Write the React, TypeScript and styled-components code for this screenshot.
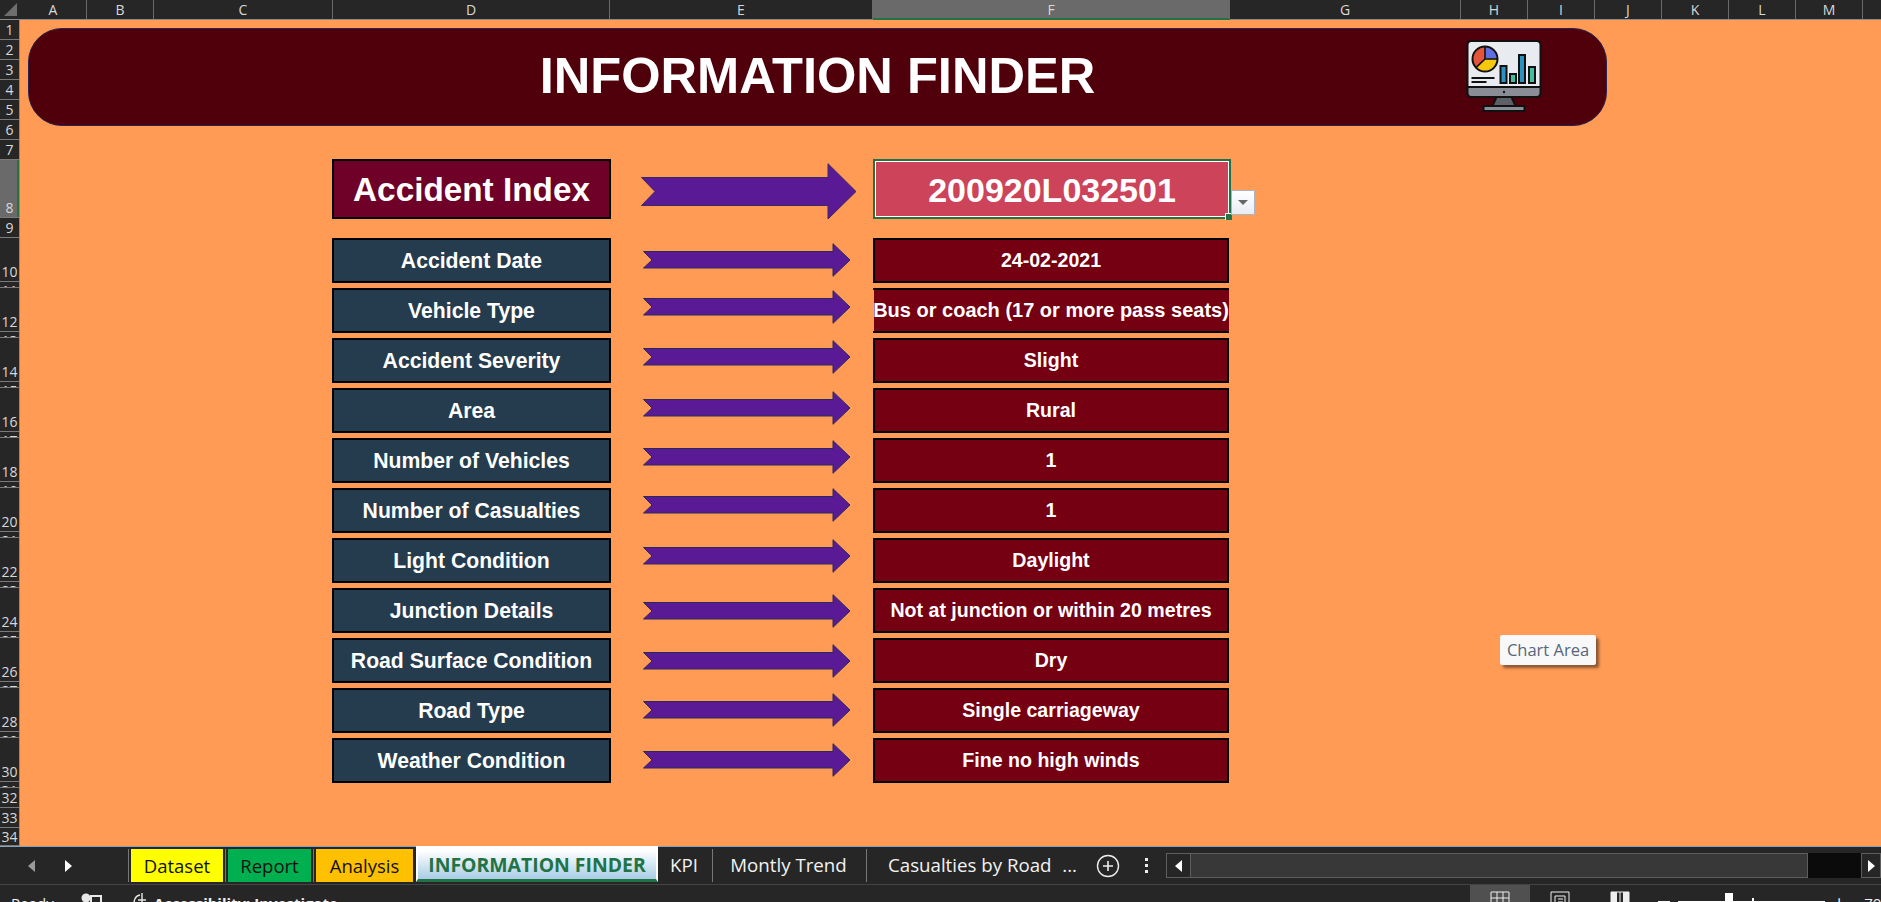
import React from "react";
import styled, { createGlobalStyle } from "styled-components";

const columns = [
  { name: "A", width: 67 },
  { name: "B", width: 67 },
  { name: "C", width: 179 },
  { name: "D", width: 277 },
  { name: "E", width: 263 },
  { name: "F", width: 357, selected: true },
  { name: "G", width: 231 },
  { name: "H", width: 67 },
  { name: "I", width: 67 },
  { name: "J", width: 67 },
  { name: "K", width: 67 },
  { name: "L", width: 67 },
  { name: "M", width: 67 },
];

const rowHeaders: { label: number; height: number; selected?: boolean }[] = [
  ...[1, 2, 3, 4, 5, 6, 7].map((label) => ({ label, height: 20 })),
  { label: 8, height: 58, selected: true },
  { label: 9, height: 20 },
  ...Array.from({ length: 22 }, (_, i) => ({
    label: i + 10,
    height: i % 2 === 0 ? 44 : 6,
  })),
  { label: 32, height: 20 },
  { label: 33, height: 20 },
  { label: 34, height: 18 },
];

const details = [
  { label: "Accident Date", value: "24-02-2021", lift: 1 },
  { label: "Vehicle Type", value: "Bus or coach (17 or more pass seats)", lift: 4, overflow: true },
  { label: "Accident Severity", value: "Slight", lift: 4 },
  { label: "Area", value: "Rural", lift: 3 },
  { label: "Number of Vehicles", value: "1", lift: 4 },
  { label: "Number of Casualties", value: "1", lift: 6 },
  { label: "Light Condition", value: "Daylight", lift: 5 },
  { label: "Junction Details", value: "Not at junction or within 20 metres", lift: 0 },
  { label: "Road Surface Condition", value: "Dry", lift: 0 },
  { label: "Road Type", value: "Single carriageway", lift: 1 },
  { label: "Weather Condition", value: "Fine no high winds", lift: 1 },
];

const Global = createGlobalStyle`
  html, body {
    margin: 0;
    padding: 0;
    overflow: hidden;
    background: #262626;
  }
`;

const Window = styled.div`
  width: 1881px;
  height: 902px;
  display: flex;
  flex-direction: column;
  overflow: hidden;
  background: #262626;
  font-family: "Open Sans", "Noto Sans", sans-serif;
`;

const ColumnBar = styled.div`
  display: flex;
  height: 20px;
  flex-shrink: 0;
  border-bottom: 1px solid #8a8a8a;
  box-sizing: border-box;
`;

const Corner = styled.div`
  width: 20px;
  flex-shrink: 0;
  display: flex;
  align-items: flex-end;
  justify-content: flex-end;
  padding: 0 3px 3px 0;
  box-sizing: border-box;
`;

const ColumnHead = styled.div<{ $width: number; $selected?: boolean }>`
  width: ${(p) => p.$width}px;
  flex-shrink: 0;
  box-sizing: border-box;
  border-right: 1px solid #6a6a6a;
  color: #d8d8d8;
  font-size: 14px;
  line-height: 20px;
  text-align: center;
  ${(p) => p.$selected && "background: #6a6a6a; border-bottom: 2px solid #217346; margin-bottom: -1px;"}
`;

const Middle = styled.div`
  display: flex;
  flex: 0 0 826px;
  min-height: 0;
`;

const RowBar = styled.div`
  width: 20px;
  flex-shrink: 0;
  overflow: hidden;
  box-sizing: border-box;
  border-right: 1px solid #8a8a8a;
`;

const RowHead = styled.div<{ $height: number; $selected?: boolean }>`
  height: ${(p) => p.$height}px;
  box-sizing: border-box;
  border-bottom: 1px solid #7a7a7a;
  overflow: hidden;
  display: flex;
  align-items: ${(p) => (p.$height > 20 ? "flex-end" : p.$height < 10 ? "flex-start" : "center")};
  justify-content: center;
  color: #d8d8d8;
  font-size: 14px;
  line-height: 18px;
  ${(p) => p.$selected && "background: #6a6a6a; box-shadow: inset -2px 0 0 #217346;"}
`;

const Sheet = styled.div`
  position: relative;
  flex: 1;
  min-width: 0;
  background: #ff9b55;
  padding: 8px 0 0 8px;
  box-sizing: border-box;
`;

const Banner = styled.div`
  position: relative;
  width: 1579px;
  height: 98px;
  box-sizing: border-box;
  border: 1px solid #2c2350;
  border-radius: 34px;
  background: #4f000b;
  display: flex;
  align-items: center;
  justify-content: center;
`;

const Title = styled.h1`
  margin: 0 0 2px;
  color: #fff;
  font-family: "Liberation Sans", Arial, sans-serif;
  font-size: 50.6px;
  font-weight: 700;
  line-height: 1;
`;

const BannerIcon = styled.svg`
  position: absolute;
  left: 1437px;
  top: 11px;
`;

const Finder = styled.div`
  margin: 33px 0 0 304px;
  font-family: "Liberation Sans", Arial, sans-serif;
  font-weight: 700;
  color: #fff;
`;

const IndexRow = styled.div`
  display: grid;
  grid-template-columns: 279px 262px 358px;
  height: 59px;
  margin-bottom: 20px;
`;

const DetailGrid = styled.div`
  display: grid;
  grid-template-columns: 279px 262px 356px;
  grid-auto-rows: 45px;
  row-gap: 5px;
`;

const IndexLabel = styled.div`
  box-sizing: border-box;
  border: 2px solid #000;
  padding-top: 2px;
  background: #6f0028;
  font-size: 33.3px;
  display: flex;
  align-items: center;
  justify-content: center;
`;

const IndexValue = styled.div`
  position: relative;
  box-sizing: border-box;
  height: 60px;
  border: 2px solid #217346;
  padding-top: 2px;
  box-shadow: inset 0 0 0 1px #fff;
  background: #cd4359;
  font-size: 34px;
  display: flex;
  align-items: center;
  justify-content: center;
`;

const FillHandle = styled.span`
  position: absolute;
  right: -3px;
  bottom: -3px;
  width: 6px;
  height: 6px;
  background: #217346;
  border: 1px solid #fff;
  border-width: 1px 0 0 1px;
`;

const DropButton = styled.span`
  position: absolute;
  right: -26px;
  bottom: 2px;
  width: 24px;
  height: 25px;
  box-sizing: border-box;
  border: 1px solid #a9b4c4;
  background: linear-gradient(#ffffff, #e8ecf4);
  display: flex;
  align-items: center;
  justify-content: center;

  &::after {
    content: "";
    border-left: 5px solid transparent;
    border-right: 5px solid transparent;
    border-top: 5px solid #666;
  }
`;

const ArrowCell = styled.div`
  display: flex;
  align-items: center;
`;

const ArrowShape = styled.svg<{ $left: number; $lift: number }>`
  margin-left: ${(p) => p.$left}px;
  transform: translateY(${(p) => -p.$lift}px);
`;

const DetailLabel = styled.div`
  box-sizing: border-box;
  border: 2px solid #000;
  background: #243c4e;
  font-size: 21.2px;
  display: flex;
  align-items: center;
  justify-content: center;
`;

const DetailValue = styled.div<{ $overflow?: boolean }>`
  box-sizing: border-box;
  border: 2px solid #000;
  ${(p) => p.$overflow && "border-left: 0; border-right: 0; box-shadow: inset 1px 0 0 #ff9b55;"}
  background: #750012;
  font-size: ${(p) => (p.$overflow ? "20px" : "19.6px")};
  white-space: nowrap;
  display: flex;
  align-items: center;
  justify-content: center;
`;

const ChartTip = styled.div`
  position: absolute;
  left: 1480px;
  top: 615px;
  width: 96px;
  height: 30px;
  box-sizing: border-box;
  border-radius: 2px;
  background: #f8f8f8;
  box-shadow: 3px 3px 3px rgba(60, 40, 30, 0.6);
  color: #56667c;
  font-size: 16.5px;
  line-height: 30px;
  text-align: center;
  white-space: nowrap;
`;

const TabBar = styled.div`
  display: flex;
  align-items: flex-start;
  height: 39px;
  flex-shrink: 0;
  box-sizing: border-box;
  border-top: 1px solid #86a4bc;
  border-bottom: 1px solid #444;
  background: #262626;
`;

const TabNav = styled.div`
  width: 128px;
  height: 37px;
  flex-shrink: 0;
  display: flex;
  align-items: center;
  gap: 30px;
  padding-left: 28px;
  box-sizing: border-box;
`;

const Triangle = styled.span<{ $dir: "left" | "right"; $color?: string }>`
  width: 0;
  height: 0;
  border-top: 6px solid transparent;
  border-bottom: 6px solid transparent;
  ${(p) =>
    p.$dir === "left"
      ? `border-right: 7px solid ${p.$color || "#9a9a9a"};`
      : `border-left: 7px solid ${p.$color || "#fff"};`}
`;

const TabStrip = styled.div`
  display: flex;
  align-items: flex-start;
  gap: 2px;
`;

const TabLine = styled.span`
  width: 1px;
  height: 33px;
  margin-top: 2px;
  background: #777;
`;

const ColorTab = styled.div<{ $bg: string; $width: number }>`
  width: ${(p) => p.$width}px;
  height: 33px;
  margin-top: 2px;
  background: ${(p) => p.$bg};
  color: #111;
  font-size: 18.5px;
  line-height: 33px;
  text-align: center;
`;

const ActiveTab = styled.div`
  width: 242px;
  height: 36px;
  margin-left: 1px;
  box-sizing: border-box;
  border: 2px solid #fff;
  border-top-width: 3px;
  border-bottom: 3px solid #217346;
  background: linear-gradient(#ffffff 5%, #a8cde6);
  color: #217346;
  font-size: 19.4px;
  font-weight: 700;
  line-height: 31px;
  text-align: center;
  white-space: nowrap;
  margin-top: -1px;
`;

const PlainTab = styled.div<{ $width: number }>`
  width: ${(p) => p.$width}px;
  height: 37px;
  flex-shrink: 0;
  margin-left: -2px;
  color: #f2f2f2;
  font-size: 18.7px;
  line-height: 36px;
  text-align: center;
  white-space: nowrap;
`;

const TabLast = styled(PlainTab)`
  display: flex;
  justify-content: space-between;
  padding: 0 12px 0 21px;
  box-sizing: border-box;
`;

const TabTools = styled.div`
  display: flex;
  align-items: center;
  height: 37px;
  margin-left: 7px;
`;

const Dots = styled.div`
  display: flex;
  flex-direction: column;
  gap: 3px;
  margin-left: 25px;

  span {
    width: 3px;
    height: 3px;
    background: #eee;
  }
`;

const Scroller = styled.div`
  display: flex;
  align-self: flex-start;
  height: 25px;
  margin: 6px 0 0 18px;
  flex: 1;
`;

const ScrollButton = styled.div<{ $width: number }>`
  width: ${(p) => p.$width}px;
  flex-shrink: 0;
  box-sizing: border-box;
  border: 1px solid #5e5e5e;
  display: flex;
  align-items: center;
  justify-content: center;
`;

const ScrollTrack = styled.div`
  flex: 1;
  box-sizing: border-box;
  border: 1px solid #5e5e5e;
  border-left: 0;
  background: #383838;
`;

const ScrollGap = styled.div`
  width: 53px;
  flex-shrink: 0;
  background: #0b0b0b;
`;

const StatusBar = styled.div`
  display: flex;
  flex: 1;
  min-height: 0;
  overflow: hidden;
  color: #f0f0f0;
  font-size: 15px;
`;

const StatusLeft = styled.div`
  display: flex;
  align-items: flex-start;
  width: 1470px;
  flex-shrink: 0;
  padding: 8px 0 0 11px;
  box-sizing: border-box;
`;

const StatusText = styled.span<{ $bold?: boolean; $left?: number }>`
  font-weight: ${(p) => (p.$bold ? 700 : 400)};
  margin-left: ${(p) => p.$left || 0}px;
  line-height: 20px;
  white-space: nowrap;
`;

const StatusIcon = styled.svg<{ $left: number }>`
  margin-left: ${(p) => p.$left}px;
  flex-shrink: 0;
`;

const ViewButton = styled.div<{ $active?: boolean }>`
  width: 60px;
  height: 30px;
  flex-shrink: 0;
  padding-top: 6px;
  box-sizing: border-box;
  display: flex;
  justify-content: center;
  align-items: flex-start;
  ${(p) => p.$active && "background: #505050;"}
`;

const Zoom = styled.div`
  flex: 1;
  display: flex;
  align-items: flex-start;
  padding: 8px 0 0 8px;
`;

const Minus = styled.span`
  width: 12px;
  height: 2px;
  margin-top: 8px;
  background: #fff;
`;

const SliderTrack = styled.div`
  position: relative;
  width: 147px;
  height: 2px;
  margin: 8px 0 0 8px;
  background: #fff;
`;

const SliderThumb = styled.span`
  position: absolute;
  left: 47px;
  top: -8px;
  width: 8px;
  height: 20px;
  background: #fff;
`;

const SliderTick = styled.span`
  position: absolute;
  left: 74px;
  top: -3px;
  width: 2px;
  height: 12px;
  background: #fff;
`;

const Plus = styled.span`
  margin: -2px 0 0 9px;
  color: #fff;
  font-size: 18px;
  line-height: 22px;
`;

const Percent = styled.span`
  margin-left: 20px;
  line-height: 20px;
`;

const BigArrow = () => (
  <ArrowShape $left={30} $lift={-2} width="216" height="57" viewBox="0 0 216 57">
    <polygon points="0.5,14.5 187,14.5 187,0.7 215,28.5 187,56 187,42.5 0.5,42.5 14,28.5" fill="#5a1a96" stroke="#3a2a60" />
  </ArrowShape>
);

const SmallArrow = ({ lift }: { lift: number }) => (
  <ArrowShape $left={32} $lift={lift} width="208" height="34" viewBox="0 0 208 34">
    <polygon points="0.5,8.5 190,8.5 190,0.7 207,17 190,33.3 190,25 0.5,25 9,17" fill="#5a1a96" stroke="#2a2a5a" />
  </ArrowShape>
);

const DashboardIcon = () => (
  <BannerIcon width="76" height="72" viewBox="0 0 75 72">
    <rect x="1" y="1" width="73" height="56" rx="4" fill="#e8ebf0" stroke="#111" strokeWidth="2" />
    <path d="M1 47 H74 V53 a4 4 0 0 1 -4 4 H5 a4 4 0 0 1 -4 -4 Z" fill="#8a8d96" stroke="#111" strokeWidth="2" />
    <circle cx="37.5" cy="52" r="1.2" fill="#111" />
    <path d="M30 57 L26 66 H49 L45 57 Z" fill="#5e6068" stroke="#111" strokeWidth="2" />
    <rect x="17" y="66" width="41" height="5" fill="#8a8d96" stroke="#111" strokeWidth="2" />
    <path d="M18.5 19 V6.5 A12.5 12.5 0 0 1 31 19 Z" fill="#5f6fe0" />
    <path d="M18.5 19 H31 A12.5 12.5 0 0 1 9.5 27.7 Z" fill="#f7c90c" />
    <path d="M18.5 19 L9.5 27.7 A12.5 12.5 0 0 1 18.5 6.5 Z" fill="#e2553c" />
    <path d="M18.5 6.5 V19 H31 M18.5 19 L9.5 27.7" fill="none" stroke="#111" strokeWidth="1.6" />
    <circle cx="18.5" cy="19" r="12.5" fill="none" stroke="#111" strokeWidth="2" />
    <rect x="34" y="26" width="6" height="17" fill="#2b93bd" stroke="#111" strokeWidth="2" />
    <rect x="43.5" y="34" width="6" height="9" fill="#3fbf9b" stroke="#111" strokeWidth="2" />
    <rect x="52.5" y="15" width="6" height="28" fill="#2b93bd" stroke="#111" strokeWidth="2" />
    <rect x="62.5" y="27" width="6" height="16" fill="#3fbf9b" stroke="#111" strokeWidth="2" />
    <path d="M5 38 H28 M5 42 H20" stroke="#111" strokeWidth="2" />
  </BannerIcon>
);

const tabs = [
  { name: "Dataset", bg: "#ffff00", width: 92 },
  { name: "Report", bg: "#00b050", width: 83 },
  { name: "Analysis", bg: "#ffc000", width: 97 },
];

export default function App() {
  return (
    <Window>
      <Global />
      <ColumnBar>
        <Corner>
          <svg width="13" height="13" viewBox="0 0 13 13">
            <polygon points="13,0 13,13 0,13" fill="#6e6e6e" />
          </svg>
        </Corner>
        {columns.map((c) => (
          <ColumnHead key={c.name} $width={c.width} $selected={c.selected}>
            {c.name}
          </ColumnHead>
        ))}
      </ColumnBar>

      <Middle>
        <RowBar>
          {rowHeaders.map((r) => (
            <RowHead key={r.label} $height={r.height} $selected={r.selected}>
              {r.label}
            </RowHead>
          ))}
        </RowBar>

        <Sheet>
          <Banner>
            <Title>INFORMATION FINDER</Title>
            <DashboardIcon />
          </Banner>

          <Finder>
            <IndexRow>
              <IndexLabel>Accident Index</IndexLabel>
              <ArrowCell>
                <BigArrow />
              </ArrowCell>
              <IndexValue>
                200920L032501
                <FillHandle />
                <DropButton />
              </IndexValue>
            </IndexRow>

            <DetailGrid>
              {details.map((d) => (
                <React.Fragment key={d.label}>
                  <DetailLabel>{d.label}</DetailLabel>
                  <ArrowCell>
                    <SmallArrow lift={d.lift} />
                  </ArrowCell>
                  <DetailValue $overflow={d.overflow}>{d.value}</DetailValue>
                </React.Fragment>
              ))}
            </DetailGrid>
          </Finder>

          <ChartTip>Chart Area</ChartTip>
        </Sheet>
      </Middle>

      <TabBar>
        <TabNav>
          <Triangle $dir="left" />
          <Triangle $dir="right" />
        </TabNav>
        <TabStrip>
          {tabs.map((t) => (
            <React.Fragment key={t.name}>
              <TabLine />
              <ColorTab $bg={t.bg} $width={t.width}>
                {t.name}
              </ColorTab>
            </React.Fragment>
          ))}
          <ActiveTab>INFORMATION FINDER</ActiveTab>
          <PlainTab $width={52}>KPI</PlainTab>
          <TabLine />
          <PlainTab $width={151}>Montly Trend</PlainTab>
          <TabLine />
          <TabLast $width={222}>
            <span>Casualties by Road</span>
            <span>...</span>
          </TabLast>
        </TabStrip>
        <TabTools>
          <svg width="24" height="24" viewBox="0 0 24 24">
            <circle cx="12" cy="12" r="10.5" fill="none" stroke="#eee" strokeWidth="1.4" />
            <path d="M12 7 V17 M7 12 H17" stroke="#eee" strokeWidth="1.6" />
          </svg>
          <Dots>
            <span />
            <span />
            <span />
          </Dots>
        </TabTools>
        <Scroller>
          <ScrollButton $width={25}>
            <Triangle $dir="left" $color="#fff" />
          </ScrollButton>
          <ScrollTrack />
          <ScrollGap />
          <ScrollButton $width={20}>
            <Triangle $dir="right" />
          </ScrollButton>
        </Scroller>
      </TabBar>

      <StatusBar>
        <StatusLeft>
          <StatusText>Ready</StatusText>
          <StatusIcon $left={27} width="22" height="16" viewBox="0 0 22 16">
            <circle cx="5" cy="5" r="4.5" fill="#e8e8e8" />
            <rect x="10" y="3" width="10" height="10" fill="none" stroke="#e8e8e8" strokeWidth="2" />
            <path d="M0 16 a5 5 0 0 1 10 0 Z" fill="#e8e8e8" />
          </StatusIcon>
          <StatusIcon $left={29} width="20" height="16" viewBox="0 0 20 16">
            <path d="M8 2 A7 7 0 1 0 14 14 M10 0 V10 M6 7 H14" fill="none" stroke="#e8e8e8" strokeWidth="1.4" />
          </StatusIcon>
          <StatusText $bold $left={2}>Accessibility: Investigate</StatusText>
        </StatusLeft>
        <ViewButton $active>
          <svg width="20" height="20" viewBox="0 0 20 20">
            <path d="M1 1 H19 V19 H1 Z M7 1 V19 M13 1 V19 M1 7 H19 M1 13 H19" fill="none" stroke="#eee" />
          </svg>
        </ViewButton>
        <ViewButton>
          <svg width="20" height="20" viewBox="0 0 20 20">
            <path d="M1 1 H19 V19 H1 Z M5 5 H15 V19 H5 Z M8 8 H13 M8 11 H13" fill="none" stroke="#eee" />
          </svg>
        </ViewButton>
        <ViewButton>
          <svg width="20" height="20" viewBox="0 0 20 20">
            <path d="M1 1 H7 V19 H1 Z M13 1 H19 V19 H13 Z" fill="#eee" />
            <path d="M1 1 H19 V19 H1 Z M10 1 V19" fill="none" stroke="#eee" />
          </svg>
        </ViewButton>
        <Zoom>
          <Minus />
          <SliderTrack>
            <SliderThumb />
            <SliderTick />
          </SliderTrack>
          <Plus>+</Plus>
          <Percent>70%</Percent>
        </Zoom>
      </StatusBar>
    </Window>
  );
}
